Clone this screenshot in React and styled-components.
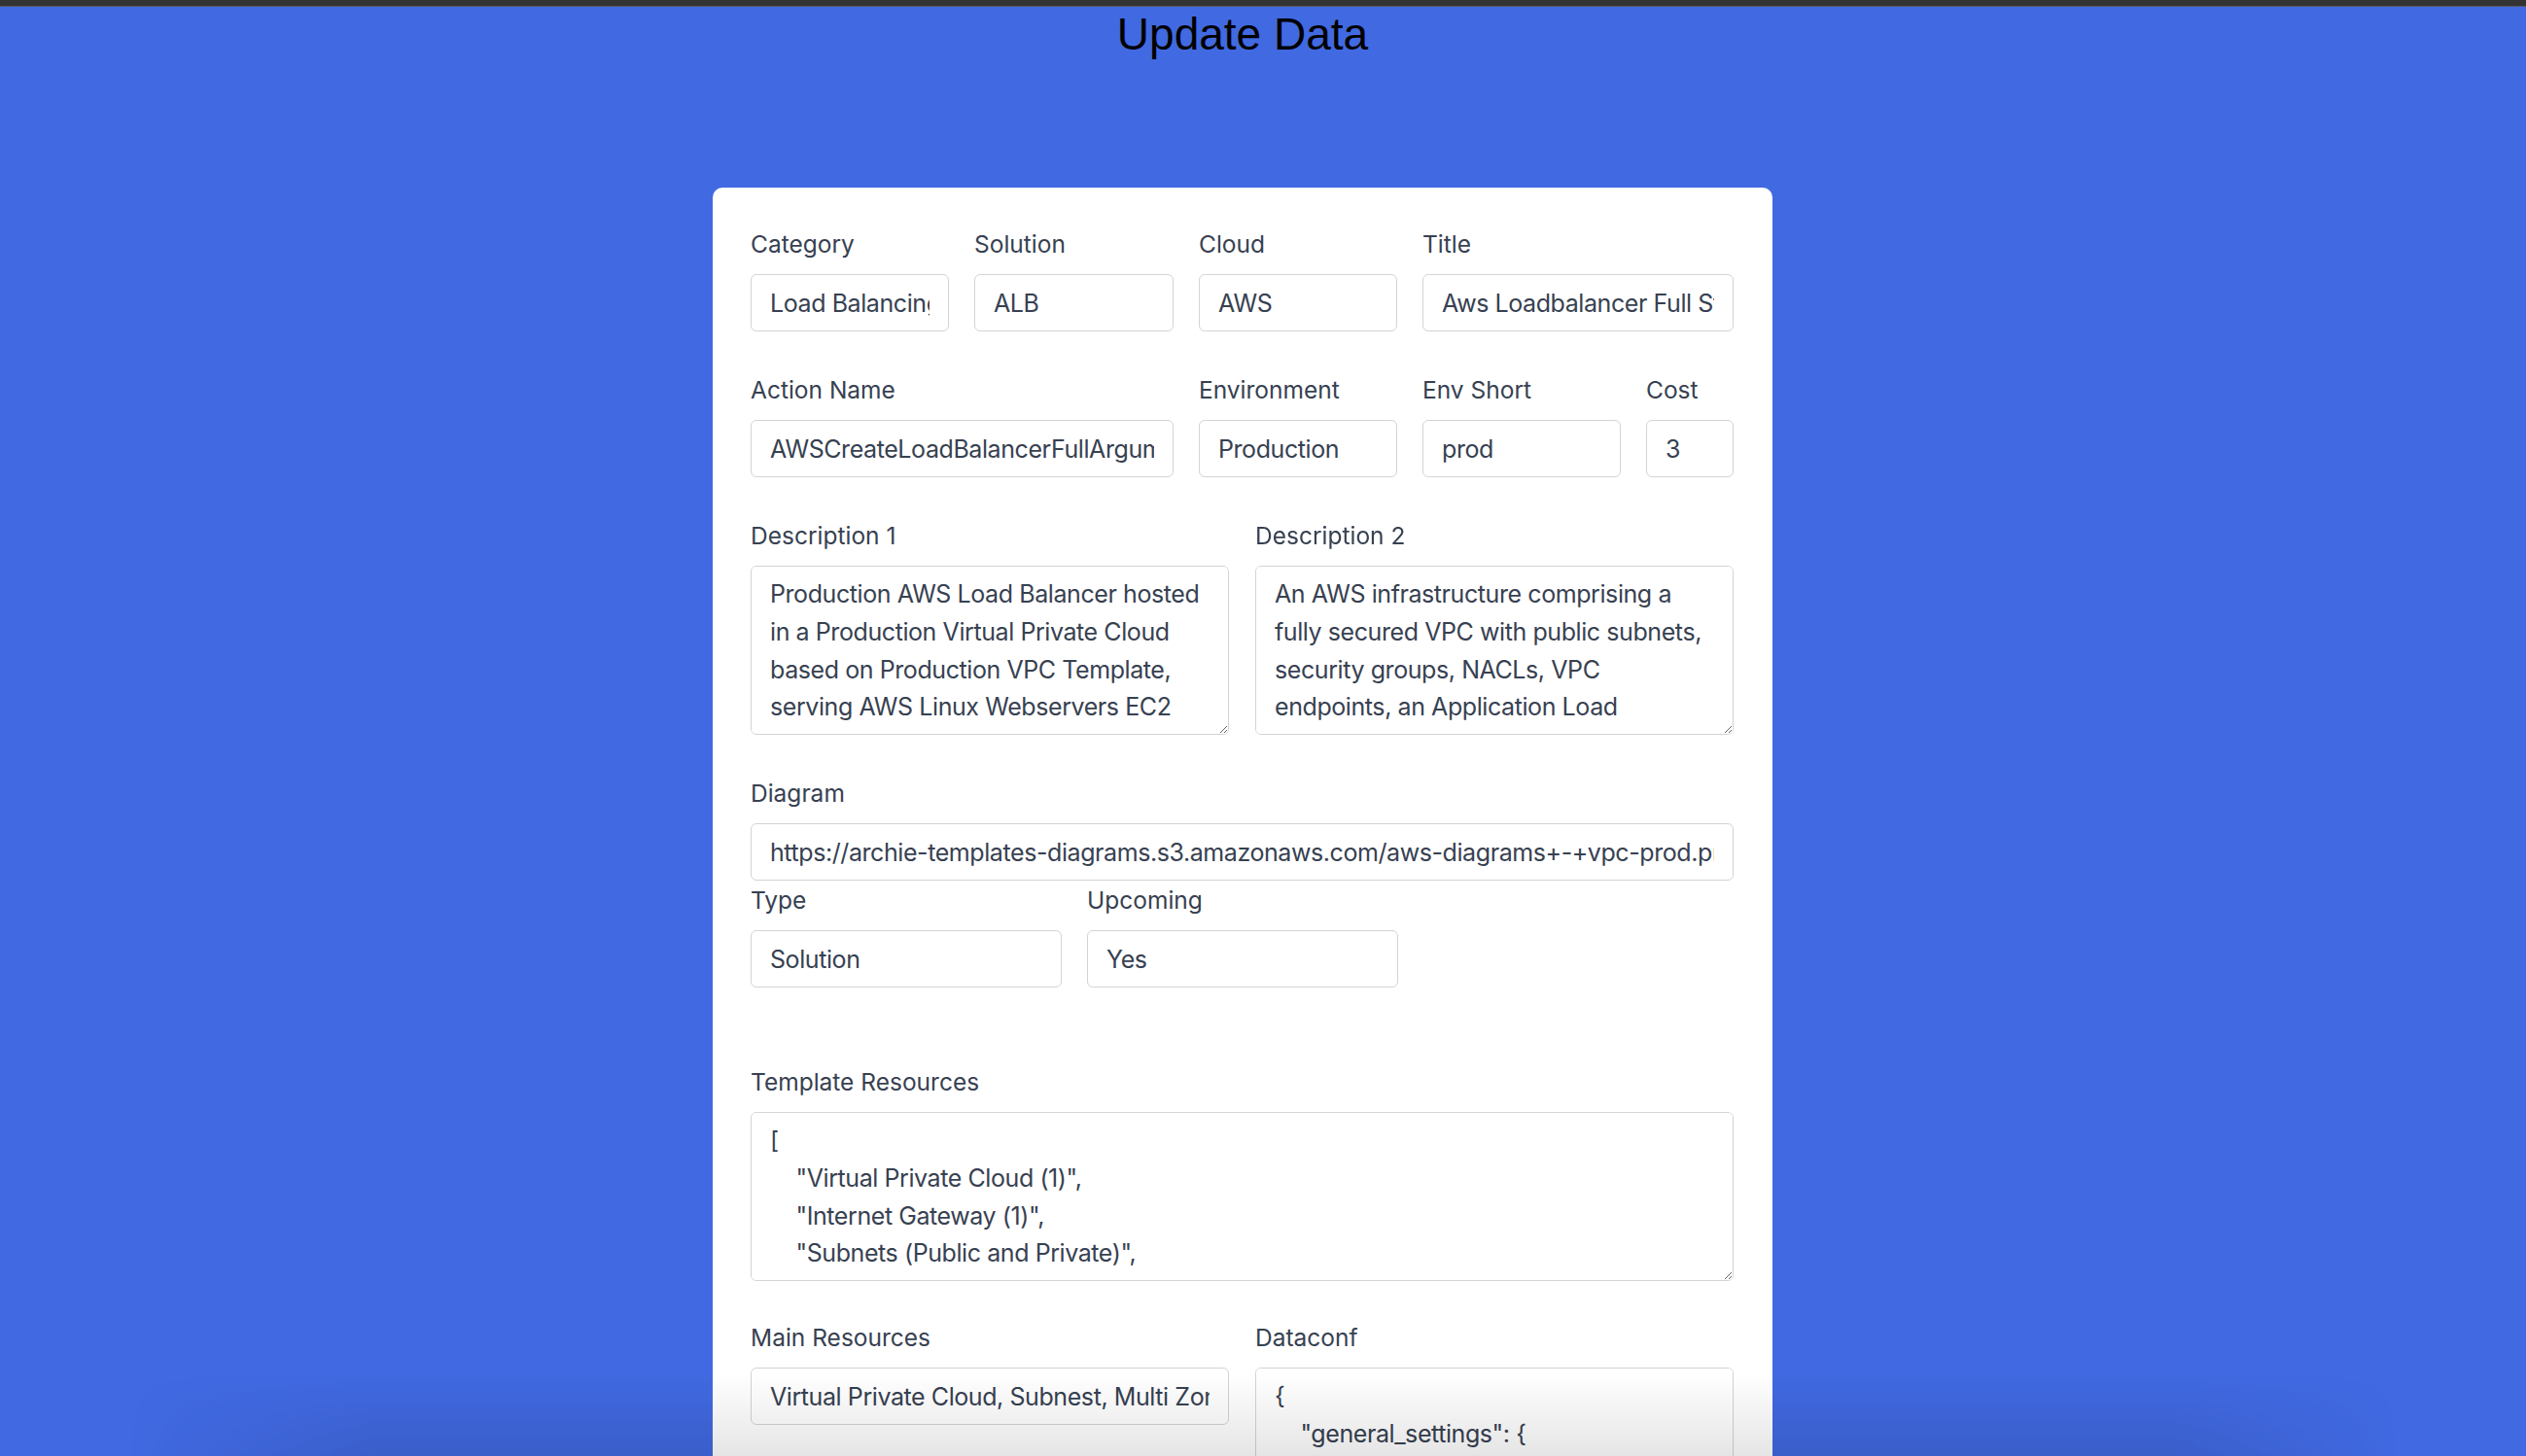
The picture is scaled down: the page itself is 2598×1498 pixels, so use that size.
import React from 'react';
import styled, { createGlobalStyle } from 'styled-components';

const GlobalStyle = createGlobalStyle`
  html, body {
    margin: 0;
    padding: 0;
    background: #4169e1;
    overflow: hidden;
  }
  body {
    font-family: Inter, "Noto Sans", sans-serif;
  }
`;

const Page = styled.div`
  min-height: 100vh;
  background: #4169e1;
`;

const TopBar = styled.div`
  height: 6px;
  background: #333333;
  border-bottom: 1px solid #5a5a5a;
`;

const Main = styled.main`
  padding-right: 42px;
`;

const Title = styled.h1`
  margin: 2px 0 0;
  text-align: center;
  font-family: "Liberation Sans", Arial, sans-serif;
  font-size: 46px;
  font-weight: 400;
  line-height: 53px;
  color: #000;
`;

const Card = styled.form`
  width: 1090px;
  box-sizing: border-box;
  margin: 131px auto 0;
  padding: 40px 40px 60px 39px;
  background: #fff;
  border-radius: 10px;
`;

const Row = styled.div`
  display: grid;
  grid-template-columns: ${p => p.$cols || '1fr'};
  column-gap: ${p => p.$gap || '26px'};
  margin-top: ${p => p.$mt || '0'};
`;

const Field = styled.div`
  min-width: 0;
`;

const Label = styled.label`
  display: block;
  margin-bottom: 13px;
  font-size: 24.5px;
  line-height: 36px;
  color: #374151;
`;

const Input = styled.input`
  display: block;
  width: 100%;
  height: 59px;
  box-sizing: border-box;
  padding: 0 19px;
  border: 1px solid #d4d4d8;
  border-radius: 6px;
  background: #fff;
  font-family: Inter, "Noto Sans", sans-serif;
  font-size: 25px;
  letter-spacing: -0.42px;
  color: #374151;
  outline: none;
`;

const TextArea = styled.textarea`
  display: block;
  width: 100%;
  height: 174px;
  box-sizing: border-box;
  padding: 9px 19px 11px;
  border: 1px solid #d4d4d8;
  border-radius: 6px;
  background: #fff;
  font-family: Inter, "Noto Sans", sans-serif;
  font-size: 25px;
  letter-spacing: -0.42px;
  line-height: 38.8px;
  color: #374151;
  outline: none;
  scrollbar-width: none;
  &::-webkit-scrollbar {
    display: none;
  }
`;

const BottomShade = styled.div`
  position: fixed;
  left: 0;
  right: 0;
  bottom: 0;
  height: 85px;
  pointer-events: none;
  background: linear-gradient(to bottom, rgba(0, 0, 0, 0), rgba(0, 0, 0, 0.1));
  -webkit-mask-image: linear-gradient(to right, transparent 5%, #000 15%, #000 86%, transparent 95%);
  mask-image: linear-gradient(to right, transparent 5%, #000 15%, #000 86%, transparent 95%);
`;

const templateResources = `[
    "Virtual Private Cloud (1)",
    "Internet Gateway (1)",
    "Subnets (Public and Private)",
    "Route Tables (2)",
    "Application Load Balancer (1)",
    "EC2 Instances (2)"
]`;

const dataconf = `{
    "general_settings": {
        "environment": "prod",
        "region": "us-east-1"
    }
}`;

const desc1 =
  'Production AWS Load Balancer hosted in a Production Virtual Private Cloud based on Production VPC Template, serving AWS Linux Webservers EC2 instances across multiple availability zones.';

const desc2 =
  'An AWS infrastructure comprising a fully secured VPC with public subnets, security groups, NACLs, VPC endpoints, an Application Load Balancer and an Auto Scaling group of web servers.';

const TextField = ({ label, value }) => (
  <Field>
    <Label>{label}</Label>
    <Input type="text" defaultValue={value} />
  </Field>
);

const AreaField = ({ label, value }) => (
  <Field>
    <Label>{label}</Label>
    <TextArea defaultValue={value} />
  </Field>
);

export default function App() {
  return (
    <Page>
      <GlobalStyle />
      <TopBar />
      <Main>
        <Title>Update Data</Title>
        <Card onSubmit={e => e.preventDefault()}>
          <Row $cols="204px 205px 204px 1fr">
            <TextField label="Category" value="Load Balancing" />
            <TextField label="Solution" value="ALB" />
            <TextField label="Cloud" value="AWS" />
            <TextField label="Title" value="Aws Loadbalancer Full Stack" />
          </Row>
          <Row $cols="435px 204px 204px 1fr" $mt="42px">
            <TextField label="Action Name" value="AWSCreateLoadBalancerFullArguments" />
            <TextField label="Environment" value="Production" />
            <TextField label="Env Short" value="prod" />
            <TextField label="Cost" value="3" />
          </Row>
          <Row $cols="1fr 1fr" $gap="27px" $mt="42px">
            <AreaField label="Description 1" value={desc1} />
            <AreaField label="Description 2" value={desc2} />
          </Row>
          <Row $mt="42px">
            <TextField
              label="Diagram"
              value="https://archie-templates-diagrams.s3.amazonaws.com/aws-diagrams+-+vpc-prod.png"
            />
          </Row>
          <Row $cols="320px 320px" $mt="2px">
            <TextField label="Type" value="Solution" />
            <TextField label="Upcoming" value="Yes" />
          </Row>
          <Row $mt="79px">
            <AreaField label="Template Resources" value={templateResources} />
          </Row>
          <Row $cols="1fr 1fr" $gap="27px" $mt="40px">
            <TextField label="Main Resources" value="Virtual Private Cloud, Subnest, Multi Zone" />
            <AreaField label="Dataconf" value={dataconf} />
          </Row>
        </Card>
      </Main>
      <BottomShade />
    </Page>
  );
}
